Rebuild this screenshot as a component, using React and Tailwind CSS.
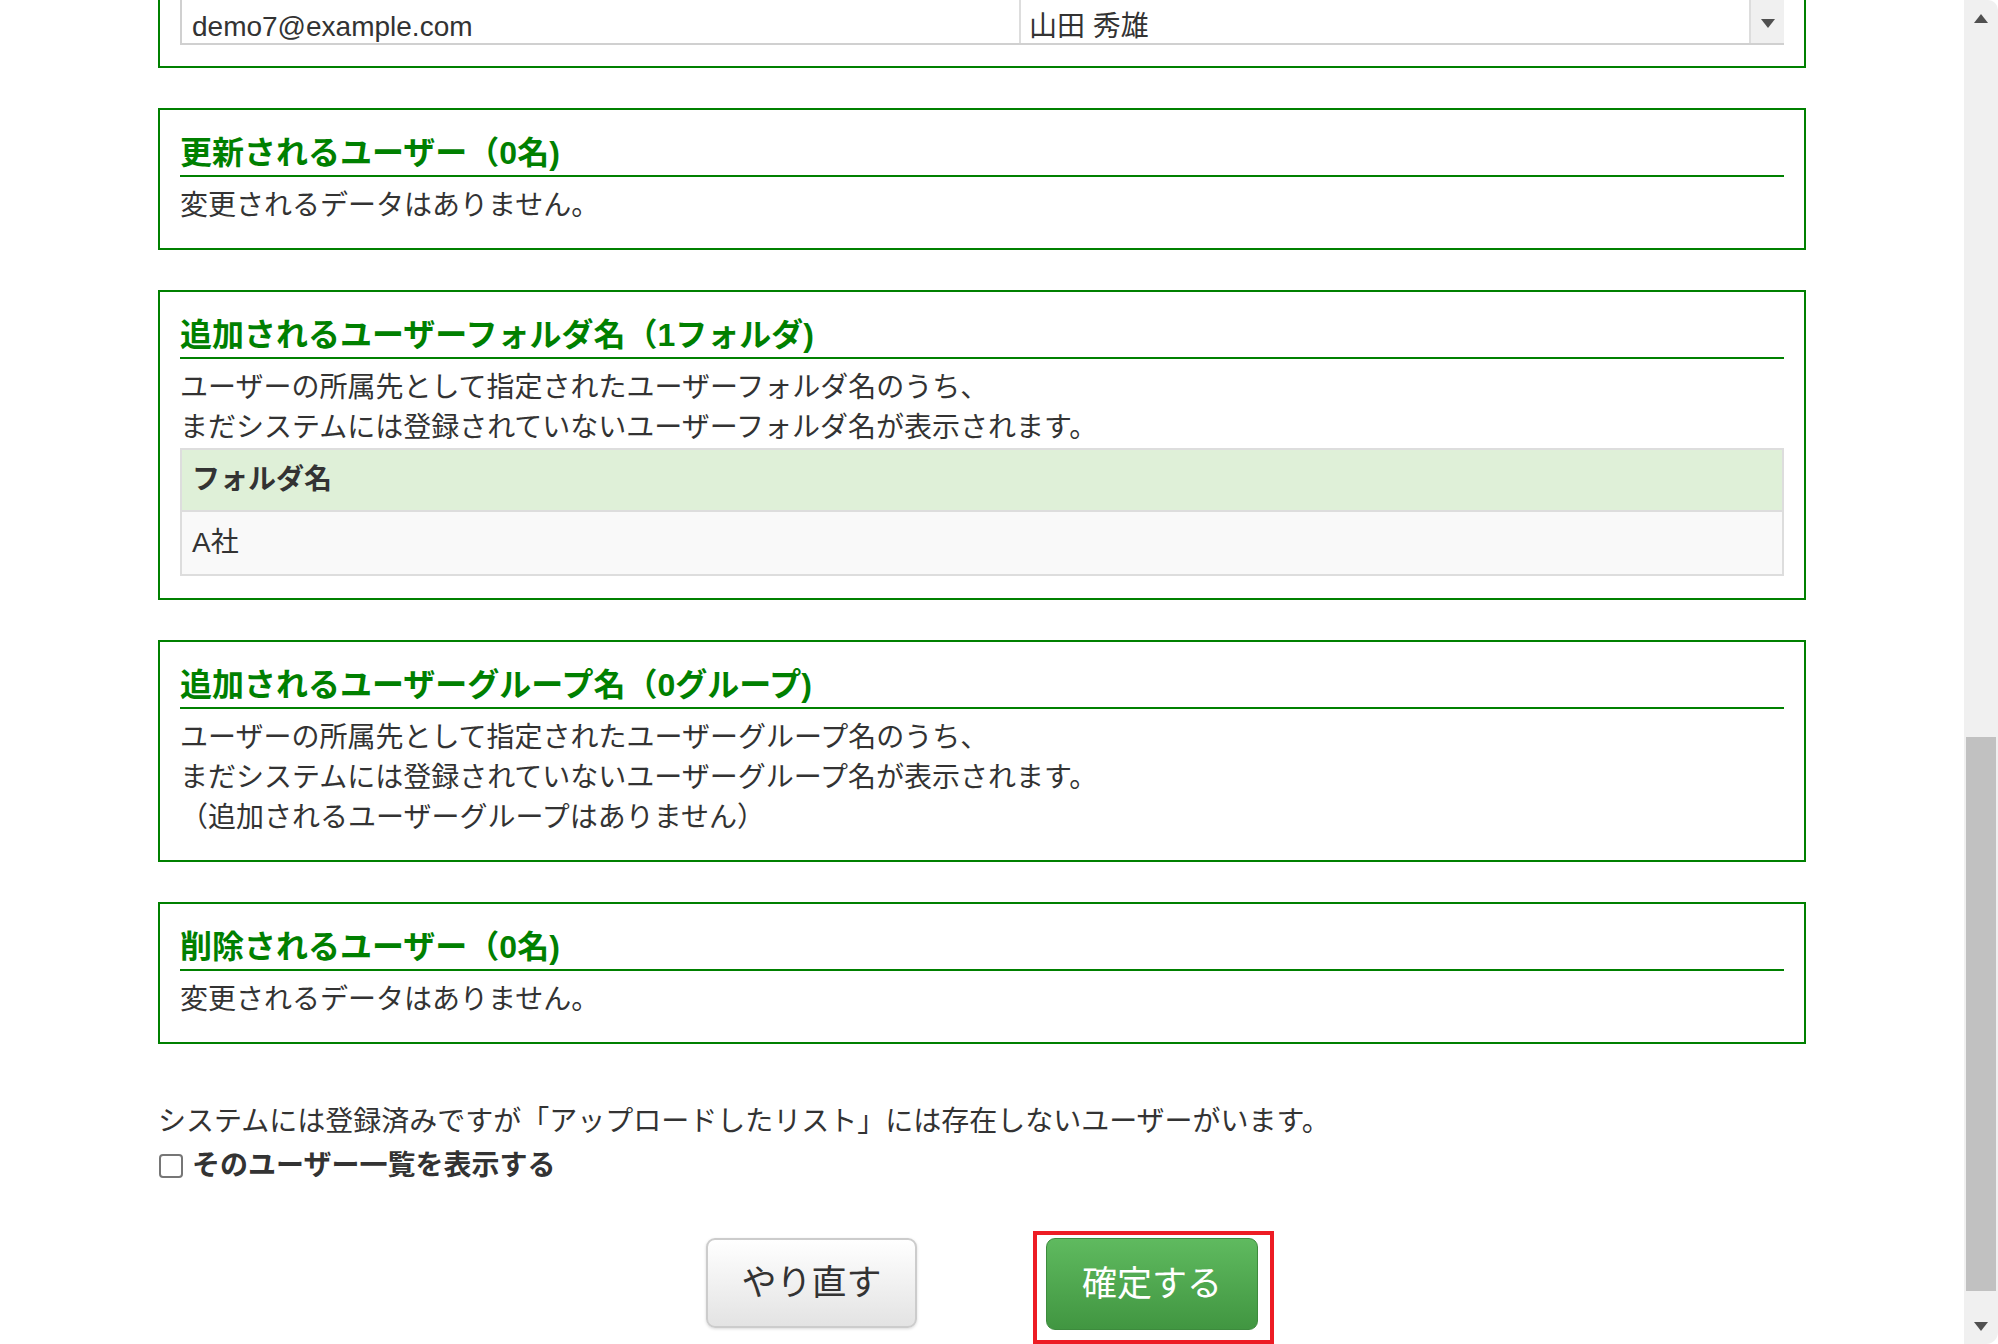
import React from "react";

const font = { fontFamily: '"Liberation Sans", "Noto Sans CJK JP", sans-serif' };

const boxClass =
  "w-[1648px] mx-auto mt-[40px] border-2 border-[#008000] px-[20px] pt-[21px] pb-[22px]";

const Heading = ({ children }) => (
  <h2 className="text-[32px] font-bold text-[#008000] leading-[44px] border-b-2 border-[#008000] mb-[9px]">
    {children}
  </h2>
);

const Arrow = ({ up }) => (
  <svg width="14" height="9" viewBox="0 0 14 9">
    <polygon
      points={up ? "7,0 14,9 0,9" : "0,0 14,0 7,9"}
      fill="#505050"
    />
  </svg>
);

const Scrollbar = () => (
  <div className="w-[34px] h-full bg-[#f0f0f0] flex flex-col rounded-tr-[10px] rounded-br-[12px]">
    <div className="h-[36px] flex items-center justify-center">
      <Arrow up />
    </div>
    <div className="flex-1 px-[2px]">
      <div className="mt-[701px] h-[554px] bg-[#c1c1c1]" />
    </div>
    <div className="h-[30px] flex items-center justify-center pb-[6px]">
      <Arrow />
    </div>
  </div>
);

const App = () => {
  return (
    <div
      className="flex h-[1344px] w-[1998px] overflow-hidden bg-white text-[#333333] text-[28px] leading-[40px]"
      style={font}
    >
      <div className="flex-1 h-full">
        {/* 登録ユーザー一覧（スクロールで上部が隠れている） */}
        <div className="w-[1648px] mx-auto border-x-2 border-b-2 border-[#008000] px-[20px] pb-[21px]">
          <div className="flex h-[45px] border-l-2 border-b-2 border-[#d0d0d0]">
            <div className="w-[839px] h-[43px] border-r-2 border-[#dddddd] pl-[10px] pt-[12px] leading-[30px] overflow-hidden">
              demo7@example.com
            </div>
            <div className="flex-1 flex h-[43px]">
              <div className="flex-1 pl-[8px] pt-[12px] leading-[30px] overflow-hidden">
                山田 秀雄
              </div>
              <div className="w-[35px] bg-[#f0f0f0] border-l-2 border-[#dddddd] flex items-center justify-center pt-[4px]">
                <Arrow />
              </div>
            </div>
          </div>
        </div>

        <div className={boxClass}>
          <Heading>更新されるユーザー（0名)</Heading>
          <p>変更されるデータはありません。</p>
        </div>

        <div className={boxClass}>
          <Heading>追加されるユーザーフォルダ名（1フォルダ)</Heading>
          <p>ユーザーの所属先として指定されたユーザーフォルダ名のうち、</p>
          <p>まだシステムには登録されていないユーザーフォルダ名が表示されます。</p>
          <div className="border-2 border-[#dddddd]">
            <div className="h-[62px] bg-[#dff0d8] border-b-2 border-[#dddddd] px-[10px] flex items-center font-bold">
              フォルダ名
            </div>
            <div className="h-[62px] bg-[#f9f9f9] px-[10px] flex items-center">
              A社
            </div>
          </div>
        </div>

        <div className={boxClass}>
          <Heading>追加されるユーザーグループ名（0グループ)</Heading>
          <p>ユーザーの所属先として指定されたユーザーグループ名のうち、</p>
          <p>まだシステムには登録されていないユーザーグループ名が表示されます。</p>
          <p>（追加されるユーザーグループはありません）</p>
        </div>

        <div className={boxClass}>
          <Heading>削除されるユーザー（0名)</Heading>
          <p>変更されるデータはありません。</p>
        </div>

        <div className="w-[1648px] mx-auto mt-[58px]">
          <p>
            システムには登録済みですが「アップロードしたリスト」には存在しないユーザーがいます。
          </p>
          <label className="mt-[4px] flex items-center gap-[9px] font-bold">
            <input
              type="checkbox"
              className="appearance-none w-[24px] h-[24px] border-2 border-[#767676] rounded-[4px] bg-white ml-[1px]"
            />
            そのユーザー一覧を表示する
          </label>
        </div>

        <div className="mt-[52px] flex justify-center items-start gap-[129px]">
          <button className="w-[211px] h-[90px] rounded-[9px] border-2 border-[#cccccc] bg-gradient-to-b from-[#ffffff] to-[#e3e3e3] shadow-[0_1px_3px_rgba(0,0,0,0.15)] text-[35px] text-[#333333]">
            やり直す
          </button>
          <div className="relative">
            <button className="w-[212px] h-[92px] rounded-[9px] border border-[#3d8b3d] bg-gradient-to-b from-[#5fba5f] to-[#419641] text-[35px] text-white">
              確定する
            </button>
            <div className="absolute -left-[13px] -top-[7px] w-[241px] h-[113px] border-4 border-[#ed1c24] pointer-events-none" />
          </div>
        </div>
      </div>
      <Scrollbar />
    </div>
  );
};

export default App;
